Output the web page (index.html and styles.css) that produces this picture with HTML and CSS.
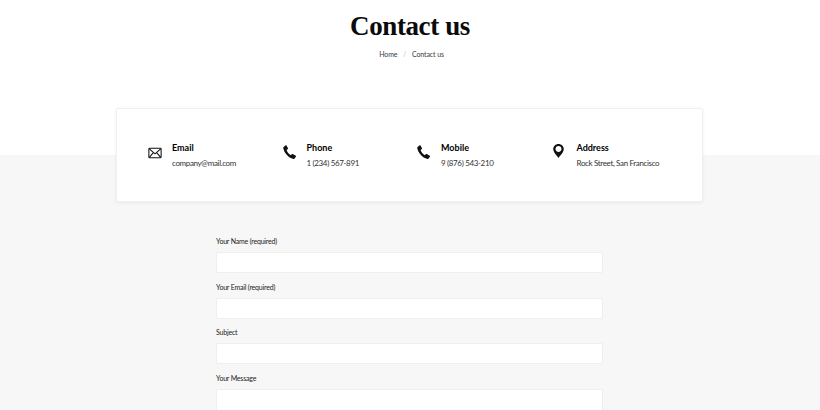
FILE: index.html
```html
<!DOCTYPE html>
<html lang="en">
<head>
  <meta charset="UTF-8">
  <title>Contact us</title>
  <link rel="stylesheet" href="styles.css">
</head>
<body>
  <!-- Page title -->
  <header class="page-header">
    <h1 class="page-title">Contact us</h1>
    <div class="breadcrumb">
      <a href="#">Home</a>
      <span class="sep">/</span>
      <a href="#">Contact us</a>
    </div>
  </header>

  <!-- Contact details -->
  <div class="info-card">
    <div class="info-item">
      <svg class="info-icon mail" viewBox="0 0 16 13" fill="none" stroke="#111" stroke-width="1.2"><rect x="1" y="1" width="14" height="11" rx="1"/><path d="M1.500 1.800 8 7.500l6.500-5.700M1.500 11.400l4.600-5.300M14.500 11.400 9.900 6.100"/></svg>
      <div>
        <div class="info-title">Email</div>
        <div class="info-text">company@mail.com</div>
      </div>
    </div>
    <div class="info-item">
      <svg class="info-icon" viewBox="0 0 14 14"><path fill="#111" d="M.6 1.900 2.700.3c.3-.2.6-.1.8.2l1.500 2.800c.1.3.1.6-.2.8L3.600 5c.5 2 2.300 4.200 4.300 5.200l1-1.100c.2-.2.500-.3.800-.1l3.100 1.700c.3.200.4.500.2.800l-1.400 2.100c-.3.400-.7.500-1.100.4C5 12.600 1.300 8 .2 3c-.1-.5.100-.8.400-1.100z"/></svg>
      <div>
        <div class="info-title">Phone</div>
        <div class="info-text">1 (234) 567-891</div>
      </div>
    </div>
    <div class="info-item">
      <svg class="info-icon" viewBox="0 0 14 14"><path fill="#111" d="M.6 1.900 2.700.3c.3-.2.6-.1.8.2l1.500 2.800c.1.3.1.6-.2.8L3.600 5c.5 2 2.300 4.200 4.300 5.200l1-1.100c.2-.2.500-.3.800-.1l3.100 1.700c.3.200.4.500.2.800l-1.400 2.100c-.3.400-.7.500-1.100.4C5 12.600 1.300 8 .2 3c-.1-.5.100-.8.400-1.100z"/></svg>
      <div>
        <div class="info-title">Mobile</div>
        <div class="info-text">9 (876) 543-210</div>
      </div>
    </div>
    <div class="info-item">
      <svg class="info-icon pin" viewBox="0 0 12 16"><path fill="#111" fill-rule="evenodd" d="M6 0C2.700 0 0 2.600 0 5.800 0 9.500 4.200 13.600 6 16c1.800-2.400 6-6.500 6-10.200C12 2.600 9.300 0 6 0zm0 2.400c1.900 0 3.400 1.500 3.400 3.400S7.900 9.200 6 9.200 2.600 7.700 2.600 5.800 4.100 2.400 6 2.400z"/></svg>
      <div>
        <div class="info-title">Address</div>
        <div class="info-text">Rock Street, San Francisco</div>
      </div>
    </div>
  </div>

  <!-- Contact form -->
  <form class="contact-form">
    <div class="form-group">
      <label for="name" class="form-label">Your Name (required)</label>
      <input type="text" id="name" class="form-input">
    </div>
    <div class="form-group">
      <label for="email" class="form-label">Your Email (required)</label>
      <input type="text" id="email" class="form-input">
    </div>
    <div class="form-group">
      <label for="subject" class="form-label">Subject</label>
      <input type="text" id="subject" class="form-input">
    </div>
    <div class="form-group">
      <label for="message" class="form-label">Your Message</label>
      <textarea id="message" class="form-input form-textarea"></textarea>
    </div>
  </form>
</body>
</html>
```

FILE: styles.css
```css
* {
  margin: 0;
  padding: 0;
  box-sizing: border-box;
}

html, body {
  height: 410px;
  overflow: hidden;
}

body {
  font-family: 'Lato', sans-serif;
  background: #f7f7f7;
  color: #111;
}

/* Page title */
.page-header {
  height: 155px;
  background: #fff;
  padding-top: 9px;
  text-align: center;
}

.page-title {
  font-family: 'Liberation Serif', serif;
  font-size: 27px;
  font-weight: 700;
  letter-spacing: -0.4px;
  line-height: 34px;
  color: #0b0b0b;
}

.breadcrumb {
  margin-top: 3px;
  padding-left: 3px;
  font-size: 7px;
  letter-spacing: -0.1px;
  line-height: 16px;
  color: #3a3a44;
}

.breadcrumb a {
  color: inherit;
  text-decoration: none;
}

.breadcrumb .sep {
  margin: 0 4px;
  color: #bbb;
}

/* Contact details */
.info-card {
  width: 587px;
  height: 94px;
  margin: -47px 0 0 116px;
  padding: 0 31px;
  display: flex;
  align-items: center;
  background: #fff;
  border: 1px solid #f0f0f0;
  border-radius: 2px;
  box-shadow: 0 1px 4px rgba(0, 0, 0, 0.06);
}

.info-item {
  width: 134.5px;
  flex-shrink: 0;
  display: flex;
  align-items: flex-start;
  gap: 10px;
}

.info-icon {
  width: 14px;
  height: 14px;
  margin-top: 4px;
  flex-shrink: 0;
}

.info-icon.mail {
  margin-top: 5px;
}

.info-icon.pin {
  width: 11px;
  height: 14px;
  margin-top: 3px;
  margin-right: 3px;
  margin-left: 1px;
}

.info-title {
  font-size: 9px;
  font-weight: 700;
  line-height: 14px;
  color: #000;
}

.info-text {
  margin-top: 1px;
  font-size: 8px;
  letter-spacing: -0.35px;
  line-height: 14px;
  color: #333;
  white-space: nowrap;
}

/* Contact form */
.contact-form {
  width: 387px;
  margin: 33px 0 0 216px;
}

.form-group {
  margin-bottom: 7.5px;
}

.form-label {
  display: block;
  margin-bottom: 4px;
  font-size: 7px;
  letter-spacing: -0.2px;
  line-height: 13px;
  color: #222;
}

.form-input {
  display: block;
  width: 100%;
  height: 21px;
  background: #fff;
  border: 1px solid #efefef;
  border-radius: 2px;
}

/* runs off the bottom of the window */
.form-textarea {
  border-bottom: 0;
  border-radius: 2px 2px 0 0;
  resize: none;
}

.form-group:last-child {
  margin-bottom: 0;
}
```
